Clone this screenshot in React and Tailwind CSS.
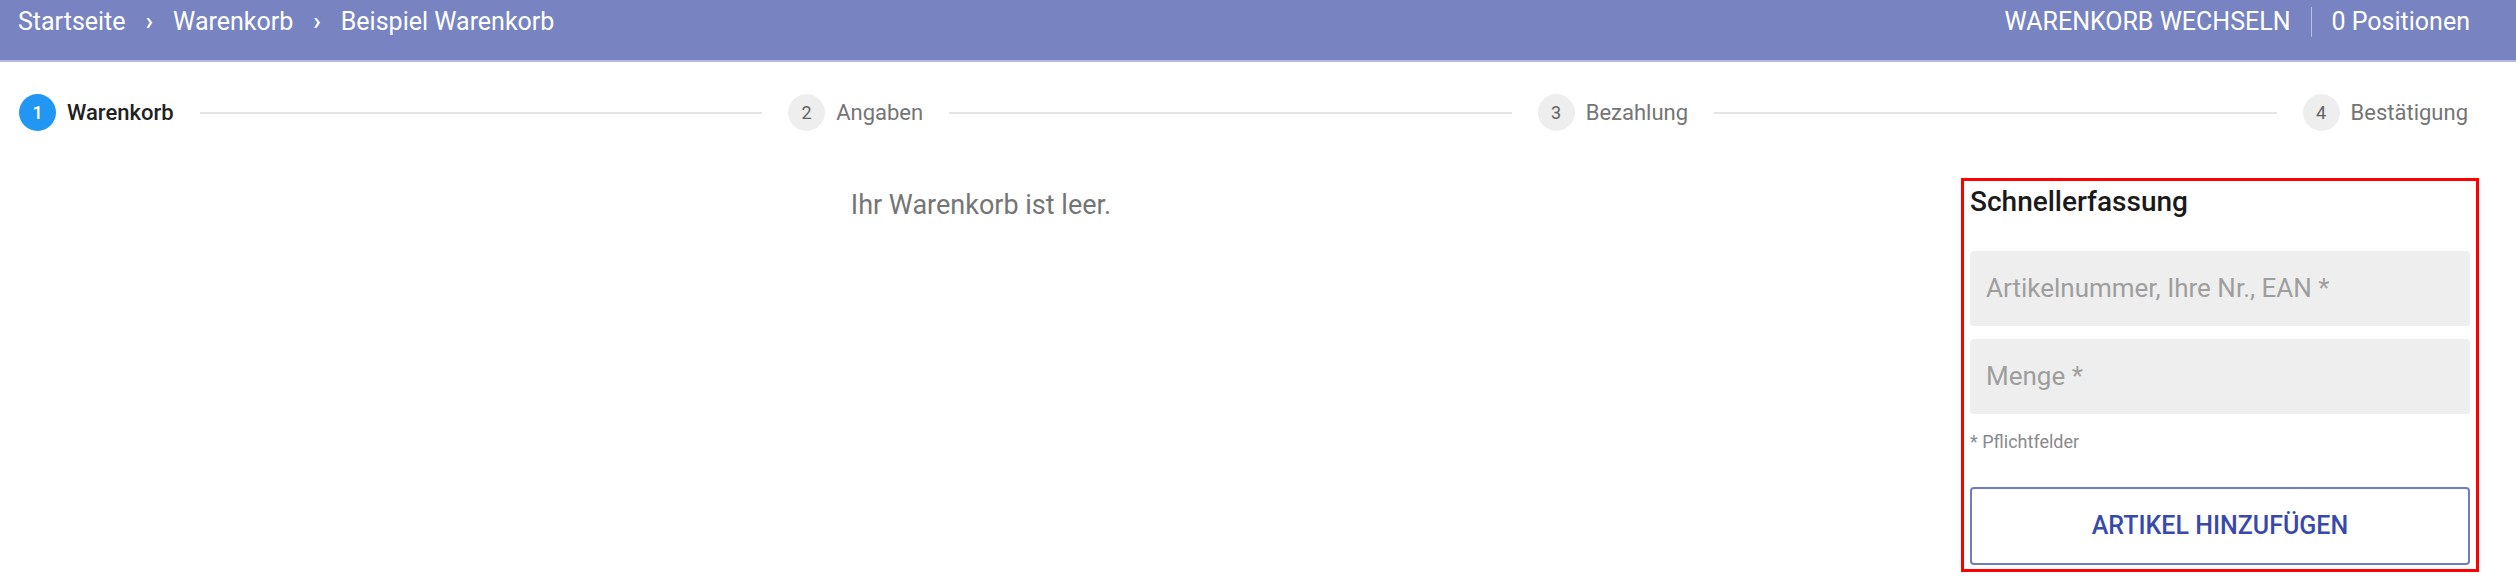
import React from "react";

const steps = [
  { n: 1, label: "Warenkorb", active: true },
  { n: 2, label: "Angaben" },
  { n: 3, label: "Bezahlung" },
  { n: 4, label: "Bestätigung" },
];

function Step({ n, label, active }) {
  return (
    <div className="flex items-center gap-[11px] shrink-0">
      <div
        className={
          active
            ? "w-[37px] h-[37px] rounded-full bg-[#2196f3] text-white flex items-center justify-center text-[18px] font-medium"
            : "w-[37px] h-[37px] rounded-full bg-[#eeeeee] text-[#616161] flex items-center justify-center text-[18px]"
        }
      >
        {n}
      </div>
      <span
        className={
          active
            ? "text-[22px] text-[#212121] font-medium"
            : "text-[22px] text-[#757575]"
        }
      >
        {label}
      </span>
    </div>
  );
}

export default function App() {
  return (
    <div className="w-[2516px] h-[582px] bg-white overflow-hidden" style={{ fontFamily: "Roboto, 'Liberation Sans', sans-serif" }}>
      <header className="h-[62px] bg-[#7784c1] border-b-2 border-[#b4badf] flex items-start justify-between pl-[18px] pr-[46px] pt-[6px] text-white text-[25px] leading-[32px]">
        <nav className="flex items-center">
          <span>Startseite</span>
          <span className="mx-[20px] font-medium">›</span>
          <span>Warenkorb</span>
          <span className="mx-[20px] font-medium">›</span>
          <span>Beispiel Warenkorb</span>
        </nav>
        <div className="flex items-center">
          <span>WARENKORB WECHSELN</span>
          <span className="mx-[20px] w-px h-[30px] bg-[#b8bfe3]"></span>
          <span>0 Positionen</span>
        </div>
      </header>

      <div className="flex items-center pl-[19px] pr-[48px] pt-[32px]">
        {steps.map((s, i) => (
          <React.Fragment key={s.n}>
            <Step {...s} />
            {i < steps.length - 1 && (
              <div className="flex-1 h-[2px] bg-[#e4e4e4] mx-[26px]"></div>
            )}
          </React.Fragment>
        ))}
      </div>

      <main className="flex items-start gap-[19px] pl-[20px] pr-[37px] mt-[47px]">
        <div className="flex-1 pt-[11px] text-center text-[27px] leading-[32px] text-[#757575]">
          Ihr Warenkorb ist leer.
        </div>
        <aside className="w-[518px] border-[3px] border-[#ff0000] px-[6px] pt-[4px] pb-[4px]">
          <h2 className="text-[28px] leading-[34px] font-medium text-[#1a1a1a]">Schnellerfassung</h2>
          <div className="mt-[32px] flex flex-col gap-[13px]">
            <div className="h-[75px] rounded-[4px] bg-[#eeeeee] flex items-center px-[16px] text-[26px] text-[#9e9e9e]">
              Artikelnummer, Ihre Nr., EAN *
            </div>
            <div className="h-[75px] rounded-[4px] bg-[#eeeeee] flex items-center px-[16px] text-[26px] text-[#9e9e9e]">
              Menge *
            </div>
          </div>
          <p className="mt-[17px] text-[18px] leading-[22px] text-[#8a8a8a]">* Pflichtfelder</p>
          <button className="mt-[34px] w-full h-[78px] rounded-[4px] border-2 border-[#6f7dc0] text-[#3949ab] text-[25px] font-medium flex items-center justify-center">
            ARTIKEL HINZUFÜGEN
          </button>
        </aside>
      </main>
    </div>
  );
}
